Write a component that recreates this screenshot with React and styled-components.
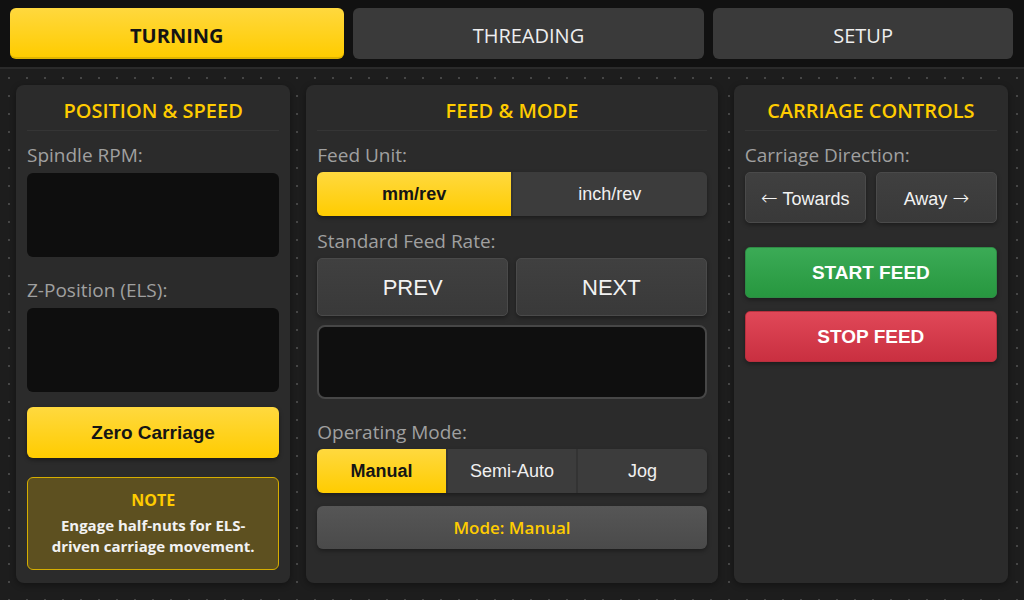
import React from 'react'
import styled, { createGlobalStyle, css } from 'styled-components'

/*
* Lathe ELS control screen: turning tab with position, feed and carriage panels.
*/

const GlobalStyle = createGlobalStyle`
    html, body {
        margin: 0;
        padding: 0;
        background: #1c1c1c;
        font-family: 'Open Sans', 'Noto Sans', sans-serif;
    }
    * {
        box-sizing: border-box;
    }
`;

const App = () => {
    return (
        <Screen>
            <GlobalStyle />
            <TabBar>
                <Tab active>TURNING</Tab>
                <Tab>THREADING</Tab>
                <Tab>SETUP</Tab>
            </TabBar>

            <Main>
                <Panel>
                    <PanelTitle>POSITION &amp; SPEED</PanelTitle>
                    <Label>Spindle RPM:</Label>
                    <Display height={84} />
                    <Label mt={21}>Z-Position (ELS):</Label>
                    <Display height={84} />
                    <YellowButton>Zero Carriage</YellowButton>
                    <Note>
                        <NoteTitle>NOTE</NoteTitle>
                        <NoteText>Engage half-nuts for ELS-driven carriage movement.</NoteText>
                    </Note>
                </Panel>

                <Panel>
                    <PanelTitle>FEED &amp; MODE</PanelTitle>
                    <Label>Feed Unit:</Label>
                    <Segmented>
                        <Segment active>mm/rev</Segment>
                        <Segment>inch/rev</Segment>
                    </Segmented>
                    <Label mt={13}>Standard Feed Rate:</Label>
                    <ButtonRow gap={8}>
                        <GrayButton big>PREV</GrayButton>
                        <GrayButton big>NEXT</GrayButton>
                    </ButtonRow>
                    <FeedDisplay />
                    <Label mt={21}>Operating Mode:</Label>
                    <Segmented>
                        <Segment active>Manual</Segment>
                        <Segment>Semi-Auto</Segment>
                        <Segment>Jog</Segment>
                    </Segmented>
                    <ModeBar>Mode: Manual</ModeBar>
                </Panel>

                <Panel>
                    <PanelTitle>CARRIAGE CONTROLS</PanelTitle>
                    <Label>Carriage Direction:</Label>
                    <ButtonRow gap={10}>
                        <GrayButton><Arrow>←</Arrow> Towards</GrayButton>
                        <GrayButton>Away <Arrow>→</Arrow></GrayButton>
                    </ButtonRow>
                    <ActionButton variant="start">START FEED</ActionButton>
                    <ActionButton variant="stop">STOP FEED</ActionButton>
                </Panel>
            </Main>
        </Screen>
    );
};

// whole window
const Screen = styled.div`
    width: 1024px;
    height: 600px;
    display: flex;
    flex-direction: column;
    overflow: hidden;
`;

// top tab strip
const TabBar = styled.nav`
    display: flex;
    gap: 9px;
    padding: 8px 11px 8px 10px;
    background: #111111;
    border-bottom: 2px solid #2a2a2a;
`;

const Tab = styled.div`
    flex: 1 1 auto;
    height: 51px;
    padding-top: 3px;
    display: flex;
    align-items: center;
    justify-content: center;
    border-radius: 6px;
    font-size: 20px;
    background: #3a3a3a;
    color: #eeeeee;
    ${p => p.active && css`
        background: linear-gradient(180deg, #ffd83e 0%, #ffcc00 100%);
        color: #141414;
        font-weight: 700;
        border-bottom: 2px solid #e0b400;
        padding-top: 5px;
    `}
`;

// dotted work area holding the three panels
const Main = styled.main`
    flex: 1;
    display: grid;
    grid-template-columns: 1fr 1.5fr 1fr;
    gap: 16px;
    padding: 16px 16px 17px;
    background-color: #1d1d1d;
    background-image: radial-gradient(circle, #464646 1px, transparent 1.2px);
    background-size: 18px 18px;
    background-position: 0 0;
`;

const Panel = styled.section`
    background: #2b2b2b;
    border-radius: 8px;
    padding: 12px 11px;
    display: flex;
    flex-direction: column;
    box-shadow: 0 2px 6px rgba(0, 0, 0, 0.35);
`;

const PanelTitle = styled.h2`
    margin: 0;
    padding-bottom: 5px;
    line-height: 28px;
    font-size: 20px;
    font-weight: 600;
    text-align: center;
    color: #ffcc00;
    border-bottom: 1px solid #353535;
`;

const Label = styled.div`
    margin-top: ${p => (p.mt != null ? p.mt : 12)}px;
    margin-bottom: 5px;
    line-height: 24px;
    font-size: 19px;
    color: #a0a0a0;
`;

// black readout boxes
const Display = styled.div`
    height: ${p => p.height}px;
    margin-top: 1px;
    background: #0e0e0e;
    border-radius: 6px;
`;

const FeedDisplay = styled.div`
    height: 74px;
    margin-top: 9px;
    background: #0f0f0f;
    border: 2px solid #474747;
    border-radius: 8px;
`;

const buttonFont = css`
    font-family: 'Liberation Sans', Arial, sans-serif;
`;

const YellowButton = styled.button`
    ${buttonFont}
    margin-top: 15px;
    height: 51px;
    border: none;
    border-radius: 6px;
    background: linear-gradient(180deg, #ffd93f 0%, #ffcc00 100%);
    color: #151515;
    font-size: 19px;
    font-weight: 700;
    box-shadow: 0 2px 4px rgba(0, 0, 0, 0.4);
`;

const Note = styled.div`
    margin-top: 19px;
    padding: 11px 16px 12px;
    background: #5d5020;
    border: 1px solid #d6ae00;
    border-radius: 6px;
    text-align: center;
`;

const NoteTitle = styled.div`
    font-size: 16px;
    font-weight: 700;
    color: #ffcc00;
    line-height: 22px;
    margin-bottom: 4px;
`;

const NoteText = styled.div`
    font-size: 15px;
    font-weight: 700;
    color: #f2f2f2;
    line-height: 21px;
`;

// segmented toggles (feed unit, operating mode)
const Segmented = styled.div`
    display: flex;
    height: 44px;
    border-radius: 6px;
    overflow: hidden;
    background: #3c3c3c;
    box-shadow: 0 2px 4px rgba(0, 0, 0, 0.35);
`;

const Segment = styled.div`
    ${buttonFont}
    flex: 1;
    display: flex;
    align-items: center;
    justify-content: center;
    font-size: 18px;
    color: #f0f0f0;
    background: #3c3c3c;
    & + & {
        border-left: 2px solid #333333;
    }
    ${p => p.active && css`
        background: linear-gradient(180deg, #ffd93f 0%, #ffcc00 100%);
        color: #151515;
        font-weight: 700;
    `}
`;

const ButtonRow = styled.div`
    display: grid;
    grid-template-columns: 1fr 1fr;
    gap: ${p => p.gap}px;
`;

const GrayButton = styled.button`
    ${buttonFont}
    height: ${p => (p.big ? 58 : 51)}px;
    border: 1px solid #4a4a4a;
    border-radius: 5px;
    background: linear-gradient(180deg, #404040 0%, #393939 100%);
    color: #f2f2f2;
    font-size: ${p => (p.big ? 22 : 18)}px;
    padding-top: 2px;
    box-shadow: 0 2px 4px rgba(0, 0, 0, 0.35);
`;

// long thin direction arrows
const Arrow = styled.span`
    font-family: 'DejaVu Sans', sans-serif;
    font-size: 20px;
    font-weight: 300;
`;

const ModeBar = styled.div`
    margin-top: 13px;
    height: 43px;
    display: flex;
    align-items: center;
    justify-content: center;
    border-radius: 6px;
    background: linear-gradient(180deg, #565656 0%, #4a4a4a 100%);
    color: #ffcc00;
    font-size: 17px;
    font-weight: 600;
    box-shadow: 0 2px 4px rgba(0, 0, 0, 0.35);
`;

const ActionButton = styled.button`
    ${buttonFont}
    height: 51px;
    margin-top: ${p => (p.variant === 'start' ? 24 : 13)}px;
    border: 1px solid ${p => (p.variant === 'start' ? '#2e8b45' : '#b8303e')};
    border-radius: 5px;
    background: ${p => (p.variant === 'start'
        ? 'linear-gradient(180deg, #3bab56 0%, #27973f 100%)'
        : 'linear-gradient(180deg, #e04858 0%, #c92f40 100%)')};
    color: #ffffff;
    font-size: 19px;
    font-weight: 700;
    box-shadow: 0 2px 4px rgba(0, 0, 0, 0.35);
`;

export default App
